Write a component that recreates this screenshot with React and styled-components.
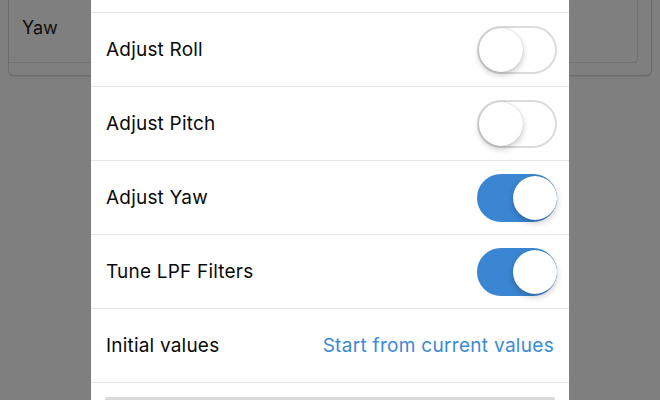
import React from 'react'
import styled, { createGlobalStyle } from 'styled-components'

const GlobalStyle = createGlobalStyle`
  html, body {
    margin: 0;
    padding: 0;
    background: #7f7f7f;
    overflow: hidden;
  }
  body {
    font-family: Inter, "Liberation Sans", sans-serif;
  }
`

const rows = [
  { label: 'Adjust Roll', on: false },
  { label: 'Adjust Pitch', on: false },
  { label: 'Adjust Yaw', on: true },
  { label: 'Tune LPF Filters', on: true },
]

function Toggle({ on }) {
  return (
    <Track on={on ? 1 : 0}>
      <Knob on={on ? 1 : 0} />
    </Track>
  )
}

function App() {
  return (
    <Page>
      <GlobalStyle />
      <Card>
        <Inner>
          <AxisLabel>Yaw</AxisLabel>
        </Inner>
      </Card>

      <Dialog>
        <Row />
        {rows.map(r => (
          <Row key={r.label}>
            <Label>{r.label}</Label>
            <Toggle on={r.on} />
          </Row>
        ))}
        <Row>
          <Label>Initial values</Label>
          <Link>Start from current values</Link>
        </Row>
        <Footer>
          <Field />
        </Footer>
      </Dialog>
    </Page>
  )
}

const Page = styled.div`
  width: 660px;
  height: 400px;
  position: relative;
  display: flow-root;
  overflow: hidden;
  background: #7f7f7f;
`

const Card = styled.div`
  margin: -20px 8px 0 8px;
  height: 96px;
  border: 1px solid #6c6c6c;
  border-top: none;
  border-radius: 0 0 6px 6px;
  box-shadow: 0 1px 1px rgba(0, 0, 0, 0.08);
  padding: 0 13px 12px 0;
  box-sizing: border-box;
  display: flex;
`

const Inner = styled.div`
  flex: 1;
  border: 1px solid #737373;
  border-top: none;
  border-left: none;
  border-radius: 0 0 4px 0;
  padding: 37px 0 0 13px;
`

const AxisLabel = styled.div`
  font-size: 18px;
  color: #0d0d0d;
`

const Dialog = styled.div`
  position: absolute;
  top: -61px;
  left: 91px;
  width: 478px;
  background: #fff;
  display: flex;
  flex-direction: column;
`

const Row = styled.div`
  box-sizing: border-box;
  height: 74px;
  display: flex;
  align-items: center;
  justify-content: space-between;
  padding: 0 12px 0 15px;
  border-bottom: 1px solid #e6e6e6;
`

const Label = styled.span`
  font-size: 19px;
  color: #0a0a0a;
  letter-spacing: 0.2px;
`

const Link = styled.span`
  font-size: 19px;
  color: #3a8ad6;
  margin-right: 3px;
  letter-spacing: 0.3px;
`

const Track = styled.div`
  width: 80px;
  height: 48px;
  border-radius: 24px;
  box-sizing: border-box;
  position: relative;
  background: ${p => (p.on ? '#3a86d2' : '#fff')};
  border: ${p => (p.on ? '2px solid #3a86d2' : '2px solid #dcdcdc')};
`

const Knob = styled.div`
  position: absolute;
  top: 0;
  left: ${p => (p.on ? '34px' : '0')};
  width: 44px;
  height: 44px;
  border-radius: 50%;
  background: #fff;
  box-shadow: 0 3px 6px rgba(0, 0, 0, 0.22), 0 0 1px rgba(0, 0, 0, 0.25);
`

const Footer = styled.div`
  padding: 14px 14px 0 14px;
  height: 60px;
`

const Field = styled.div`
  height: 40px;
  border: 1px solid #d2d2d2;
  border-top: 3px solid #dadada;
  border-radius: 2px;
  background: #fbfbfb;
`

export default App
